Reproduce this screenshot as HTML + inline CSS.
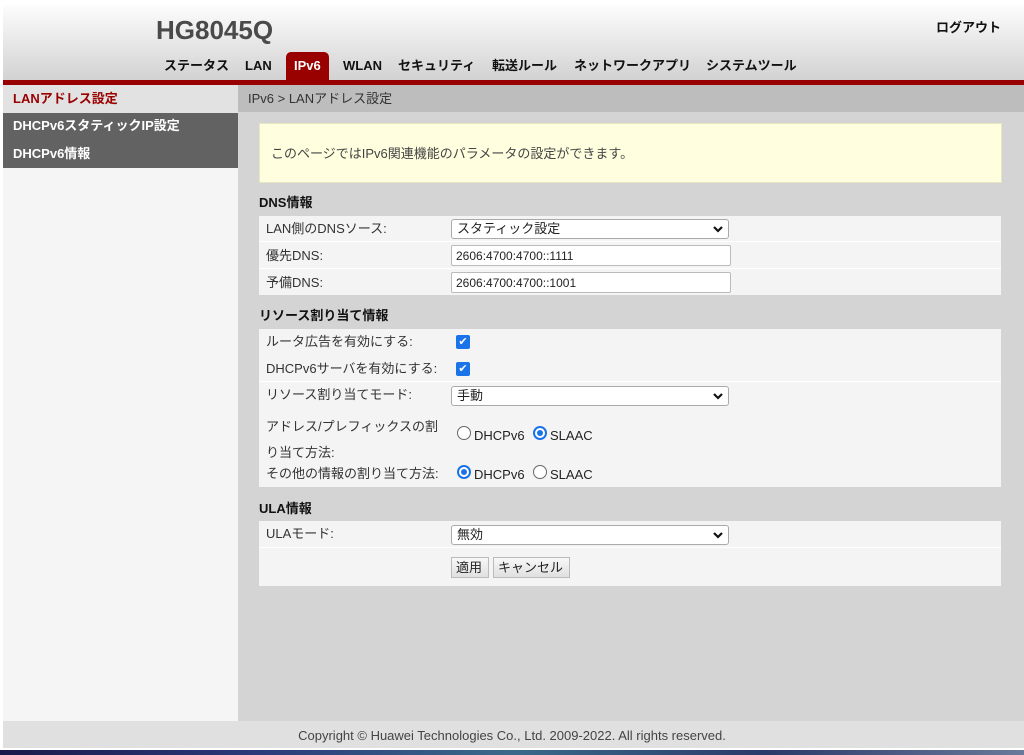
<!DOCTYPE html>
<html><head><meta charset="utf-8"><style>
*{margin:0;padding:0;box-sizing:border-box}
body{width:1024px;height:755px;position:relative;background:#fff;font-family:"Liberation Sans","Noto Sans CJK JP",sans-serif;font-size:13px;line-height:15px;color:#333;overflow:hidden}
.a{position:absolute}
#hdr{left:3px;top:5px;width:1021px;height:75px;background:linear-gradient(#fdfdfd,#d2d2d2)}
.nav{top:58px;font-weight:bold;font-size:13px;color:#111}
#red{left:3px;top:80px;width:1021px;height:5px;background:#990000}
#side{left:3px;top:85px;width:235px;height:636px;background:#f5f5f5}
#main{left:238px;top:85px;width:786px;height:636px;background:#d4d4d4}
.lbl{color:#333;font-size:13px}
.row{background:#f4f4f4}
.sel{background:#fff;border:1px solid #aaa;border-radius:3px;height:20px;font-size:13px;line-height:16px;padding:1px 5px;color:#222}
.inp{background:#fff;border:1px solid #bbb;border-radius:2px;height:21px;font-size:12px;line-height:14px;padding:3px 4px;color:#222}
.chk{width:14px;height:14px;background:#1a73e8;border-radius:2px}
.rad{width:14px;height:14px;border:1px solid #666;border-radius:50%;background:#fff}
.radon{width:14px;height:14px;border:2px solid #1a73e8;border-radius:50%;background:#fff}
.radon::after{content:"";position:absolute;left:2px;top:2px;width:6px;height:6px;border-radius:50%;background:#1a73e8}
.h{font-weight:bold;font-size:13px;color:#111}
.btn{background:linear-gradient(#f8f8f8,#e0e0e0);border:1px solid #bbb;height:21px;font-size:13px;line-height:15px;padding:2px 4px;color:#222}
.chev{position:absolute;width:12px;height:8px}
</style></head><body>
<div class="a" id="hdr"></div>
<div class="a" style="left:156px;top:15px;font-size:26px;line-height:30px;font-weight:bold;color:#4a4a4a">HG8045Q</div>
<div class="a" style="left:936px;top:20px;font-weight:bold;font-size:13px;color:#111">ログアウト</div>
<div class="a" style="left:286px;top:52px;width:43px;height:30px;background:#990000;border-radius:5px 5px 0 0"></div>
<div class="a nav" style="left:164px">ステータス</div>
<div class="a nav" style="left:245px">LAN</div>
<div class="a nav" style="left:294px;color:#fff">IPv6</div>
<div class="a nav" style="left:343px">WLAN</div>
<div class="a nav" style="left:398px">セキュリティ</div>
<div class="a nav" style="left:492px">転送ルール</div>
<div class="a nav" style="left:574px">ネットワークアプリ</div>
<div class="a nav" style="left:706px">システムツール</div>
<div class="a" id="red"></div>
<div class="a" id="side"></div>
<div class="a" style="left:3px;top:85px;width:235px;height:28px;background:#e2e2e2"></div>
<div class="a" style="left:13px;top:91px;font-weight:bold;color:#990000">LANアドレス設定</div>
<div class="a" style="left:3px;top:113px;width:235px;height:55px;background:#626262"></div>
<div class="a" style="left:13px;top:118px;font-weight:bold;color:#fff">DHCPv6スタティックIP設定</div>
<div class="a" style="left:13px;top:146px;font-weight:bold;color:#fff">DHCPv6情報</div>
<div class="a" id="main"></div>
<div class="a" style="left:238px;top:85px;width:786px;height:27px;background:#bdbdbd"></div>
<div class="a" style="left:248px;top:91px;color:#333">IPv6 &gt; LANアドレス設定</div>
<div class="a" style="left:259px;top:123px;width:743px;height:60px;background:#ffffdf;border:1px solid #e6e6c0"></div>
<div class="a" style="left:271px;top:146px;color:#444">このページではIPv6関連機能のパラメータの設定ができます。</div>

<div class="a h" style="left:259px;top:195px">DNS情報</div>
<div class="a row" style="left:259px;top:216px;width:742px;height:79px"></div>
<div class="a" style="left:259px;top:241px;width:742px;height:1px;background:#fff"></div>
<div class="a" style="left:259px;top:268px;width:742px;height:1px;background:#fff"></div>
<div class="a lbl" style="left:266px;top:221px">LAN側のDNSソース:</div>
<div class="a lbl" style="left:266px;top:248px">優先DNS:</div>
<div class="a lbl" style="left:266px;top:275px">予備DNS:</div>
<div class="a sel" style="left:451px;top:219px;width:278px">スタティック設定</div>
<svg class="chev" style="left:712px;top:225px" viewBox="0 0 12 8"><path d="M2 2l4 4 4-4" fill="none" stroke="#111" stroke-width="2.2"/></svg>
<div class="a inp" style="left:451px;top:245px;width:280px">2606:4700:4700::1111</div>
<div class="a inp" style="left:451px;top:272px;width:280px">2606:4700:4700::1001</div>

<div class="a h" style="left:259px;top:308px">リソース割り当て情報</div>
<div class="a row" style="left:259px;top:329px;width:742px;height:158px"></div>
<div class="a" style="left:259px;top:381px;width:742px;height:1px;background:#fff"></div>
<div class="a lbl" style="left:266px;top:334px">ルータ広告を有効にする:</div>
<div class="a lbl" style="left:266px;top:361px">DHCPv6サーバを有効にする:</div>
<div class="a lbl" style="left:266px;top:387px">リソース割り当てモード:</div>
<div class="a lbl" style="left:266px;top:414px;line-height:26px;width:180px">アドレス/プレフィックスの割<br>り当て方法:</div>
<div class="a lbl" style="left:266px;top:466px">その他の情報の割り当て方法:</div>
<div class="a chk" style="left:456px;top:335px;color:#fff;font-size:11px;line-height:14px;text-align:center">✔</div>
<div class="a chk" style="left:456px;top:362px;color:#fff;font-size:11px;line-height:14px;text-align:center">✔</div>
<div class="a sel" style="left:451px;top:386px;width:278px">手動</div>
<svg class="chev" style="left:712px;top:392px" viewBox="0 0 12 8"><path d="M2 2l4 4 4-4" fill="none" stroke="#111" stroke-width="2.2"/></svg>
<div class="a rad" style="left:457px;top:426px"></div>
<div class="a lbl" style="left:474px;top:428px;color:#222">DHCPv6</div>
<div class="a radon" style="left:533px;top:426px"></div>
<div class="a lbl" style="left:550px;top:428px;color:#222">SLAAC</div>
<div class="a radon" style="left:457px;top:465px"></div>
<div class="a lbl" style="left:474px;top:467px;color:#222">DHCPv6</div>
<div class="a rad" style="left:533px;top:465px"></div>
<div class="a lbl" style="left:550px;top:467px;color:#222">SLAAC</div>

<div class="a h" style="left:259px;top:501px">ULA情報</div>
<div class="a row" style="left:259px;top:521px;width:742px;height:65px"></div>
<div class="a" style="left:259px;top:547px;width:742px;height:1px;background:#fff"></div>
<div class="a lbl" style="left:266px;top:526px">ULAモード:</div>
<div class="a sel" style="left:451px;top:525px;width:278px">無効</div>
<svg class="chev" style="left:712px;top:531px" viewBox="0 0 12 8"><path d="M2 2l4 4 4-4" fill="none" stroke="#111" stroke-width="2.2"/></svg>
<div class="a btn" style="left:451px;top:557px;width:38px">適用</div>
<div class="a btn" style="left:493px;top:557px;width:77px">キャンセル</div>

<div class="a" style="left:3px;top:721px;width:1021px;height:27px;background:#e0e0e0"></div>
<div class="a" style="left:0;top:728px;width:1024px;text-align:center;color:#444;font-size:13px">Copyright © Huawei Technologies Co., Ltd. 2009-2022. All rights reserved.</div>
<div class="a" style="left:0;top:750px;width:1024px;height:5px;background:linear-gradient(90deg,#1a1a4a,#2a3a7a,#3a6a8a,#2a3a6a,#6a7a9a)"></div>
</body></html>
